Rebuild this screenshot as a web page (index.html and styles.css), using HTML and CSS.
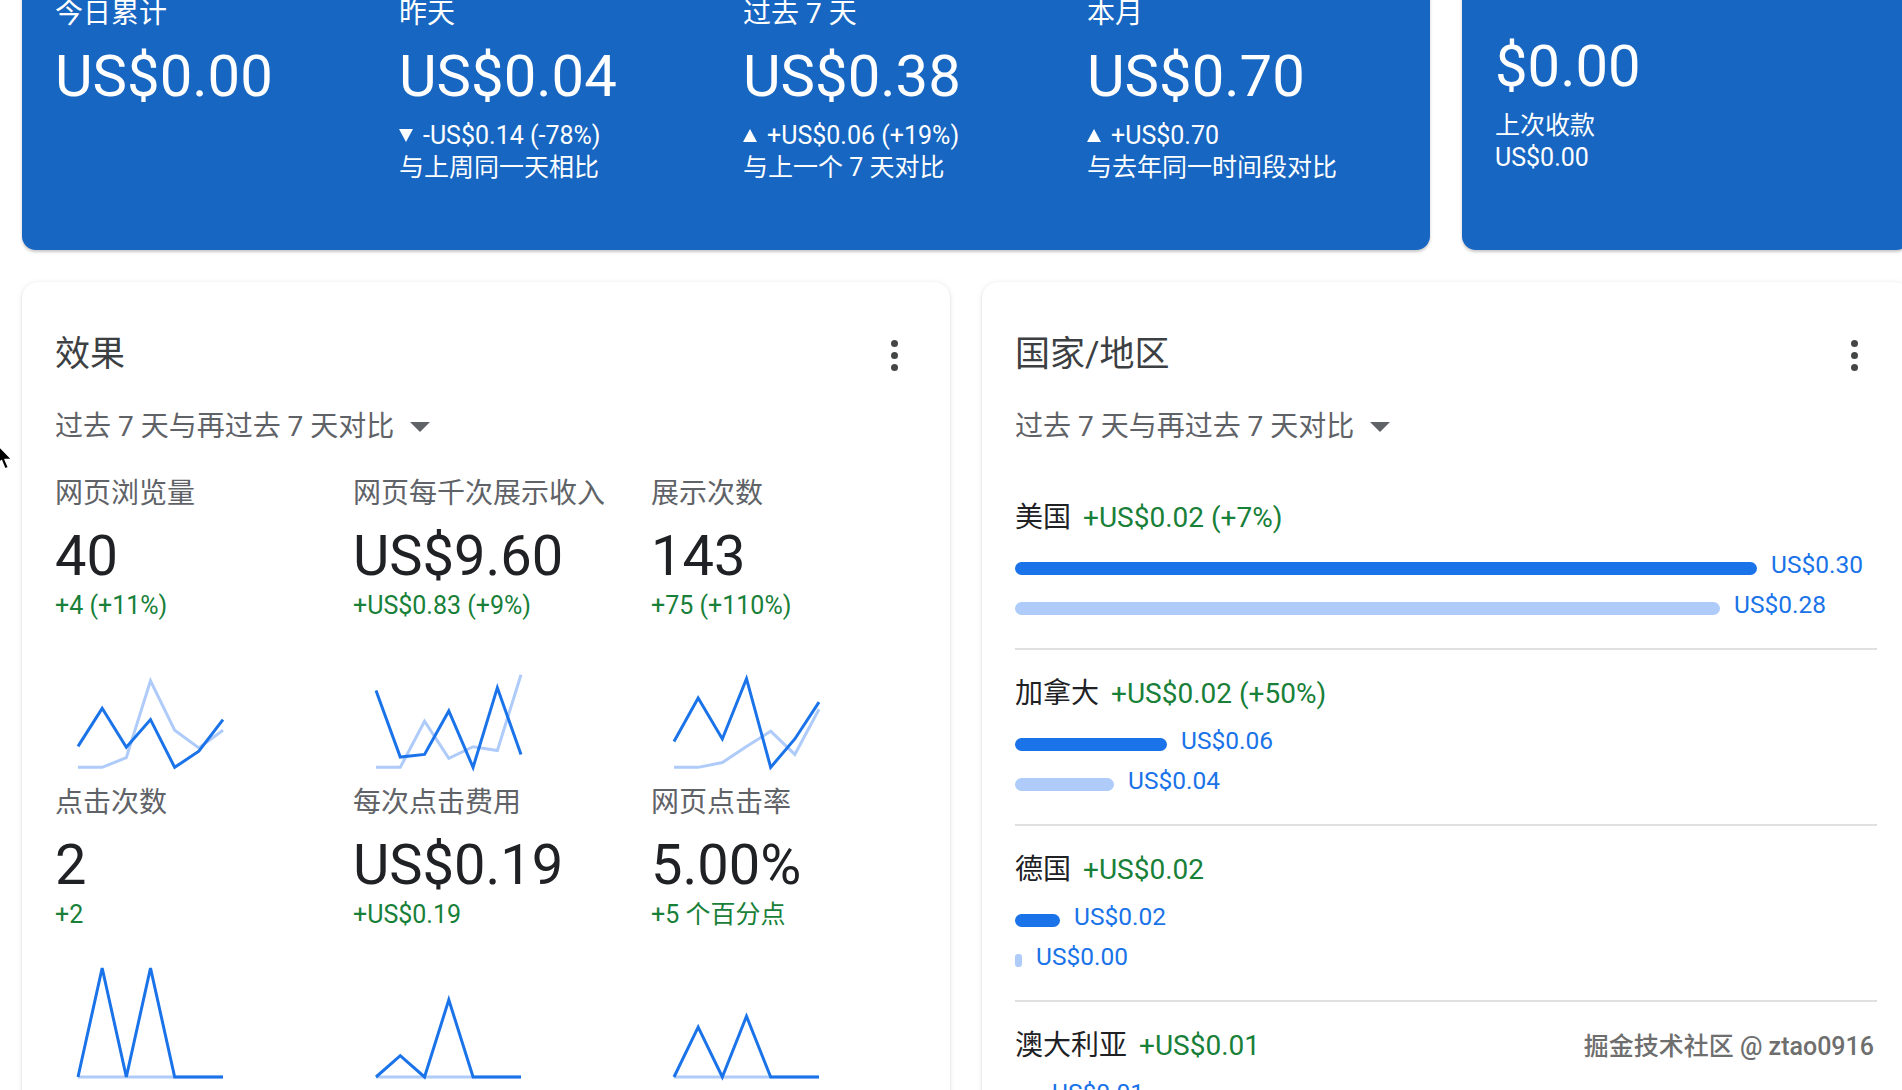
FILE: index.html
```html
<!DOCTYPE html>
<html lang="zh-CN">
<head>
<meta charset="utf-8">
<title>AdSense</title>
<link rel="stylesheet" href="styles.css">
</head>
<body>
<div class="page">
  <div class="top-row">
    <section class="earn-card">
      <div class="earn-col">
        <div class="earn-label">今日累计</div>
        <div class="earn-value">US$0.00</div>
      </div>
      <div class="earn-col">
        <div class="earn-label">昨天</div>
        <div class="earn-value">US$0.04</div>
        <div class="earn-sub first"><span class="tri down"></span>-US$0.14 (-78%)</div>
        <div class="earn-sub">与上周同一天相比</div>
      </div>
      <div class="earn-col">
        <div class="earn-label">过去 7 天</div>
        <div class="earn-value">US$0.38</div>
        <div class="earn-sub first"><span class="tri up"></span>+US$0.06 (+19%)</div>
        <div class="earn-sub">与上一个 7 天对比</div>
      </div>
      <div class="earn-col">
        <div class="earn-label">本月</div>
        <div class="earn-value">US$0.70</div>
        <div class="earn-sub first"><span class="tri up"></span>+US$0.70</div>
        <div class="earn-sub">与去年同一时间段对比</div>
      </div>
    </section>
    <section class="pay-card">
      <div class="earn-value pay-value">$0.00</div>
      <div class="earn-sub pay-first">上次收款</div>
      <div class="earn-sub">US$0.00</div>
    </section>
  </div>

  <div class="bottom-row">
    <section class="card">
      <header class="card-head">
        <h2 class="card-title">效果</h2>
        <span class="kebab"><i></i><i></i><i></i></span>
      </header>
      <div class="range">过去 7 天与再过去 7 天对比<span class="caret"></span></div>
      <div class="metrics">
        <div class="metric">
          <div class="m-label">网页浏览量</div>
          <div class="m-value">40</div>
          <div class="m-delta">+4 (+11%)</div>
          <svg class="spark" viewBox="128 41 234 341" preserveAspectRatio="none">
            <polyline class="prev" points="128,380 167,380 206,350 245,112 284,265 323,320 362,265"/>
            <polyline class="cur" points="128,315 167,197 206,318 245,232 284,380 323,330 362,232"/>
          </svg>
        </div>
        <div class="metric">
          <div class="m-label">网页每千次展示收入</div>
          <div class="m-value">US$9.60</div>
          <div class="m-delta">+US$0.83 (+9%)</div>
          <svg class="spark" viewBox="617 41 233 341" preserveAspectRatio="none">
            <polyline class="prev" points="617,380 656,380 695,237 734,352 773,316 812,328 850,93"/>
            <polyline class="cur" points="617,142 656,348 695,340 734,205 773,380 812,133 850,340"/>
          </svg>
        </div>
        <div class="metric">
          <div class="m-label">展示次数</div>
          <div class="m-value">143</div>
          <div class="m-delta">+75 (+110%)</div>
          <svg class="spark" viewBox="1103 41 234 341" preserveAspectRatio="none">
            <polyline class="prev" points="1103,380 1142,380 1181,365 1220,315 1259,268 1298,340 1337,200"/>
            <polyline class="cur" points="1103,300 1142,165 1181,292 1220,105 1259,380 1298,292 1337,178"/>
          </svg>
        </div>
        <div class="metric">
          <div class="m-label">点击次数</div>
          <div class="m-value">2</div>
          <div class="m-delta">+2</div>
          <svg class="spark" viewBox="128 975 234 335" preserveAspectRatio="none">
            <polyline class="prev" points="128,1310 362,1310"/>
            <polyline class="cur" points="128,1310 167,978 206,1310 245,978 284,1310 323,1310 362,1310"/>
          </svg>
        </div>
        <div class="metric">
          <div class="m-label">每次点击费用</div>
          <div class="m-value">US$0.19</div>
          <div class="m-delta">+US$0.19</div>
          <svg class="spark" viewBox="617 975 233 335" preserveAspectRatio="none">
            <polyline class="prev" points="617,1310 850,1310"/>
            <polyline class="cur" points="617,1310 656,1245 695,1310 734,1075 773,1310 812,1310 850,1310"/>
          </svg>
        </div>
        <div class="metric">
          <div class="m-label">网页点击率</div>
          <div class="m-value">5.00%</div>
          <div class="m-delta">+5 个百分点</div>
          <svg class="spark" viewBox="1103 975 234 335" preserveAspectRatio="none">
            <polyline class="prev" points="1103,1310 1337,1310"/>
            <polyline class="cur" points="1103,1310 1142,1158 1181,1310 1220,1125 1259,1310 1298,1310 1337,1310"/>
          </svg>
        </div>
      </div>
    </section>

    <section class="card">
      <header class="card-head">
        <h2 class="card-title">国家/地区</h2>
        <span class="kebab"><i></i><i></i><i></i></span>
      </header>
      <div class="range">过去 7 天与再过去 7 天对比<span class="caret"></span></div>
      <div class="geo-list">
        <div class="country">
          <div class="c-head">美国<span class="c-delta">+US$0.02 (+7%)</span></div>
          <div class="bar-row"><span class="bar" style="width:742px"></span><span class="bar-val">US$0.30</span></div>
          <div class="bar-row second"><span class="bar prev" style="width:705px"></span><span class="bar-val">US$0.28</span></div>
        </div>
        <div class="country">
          <div class="c-head">加拿大<span class="c-delta">+US$0.02 (+50%)</span></div>
          <div class="bar-row"><span class="bar" style="width:152px"></span><span class="bar-val">US$0.06</span></div>
          <div class="bar-row second"><span class="bar prev" style="width:99px"></span><span class="bar-val">US$0.04</span></div>
        </div>
        <div class="country">
          <div class="c-head">德国<span class="c-delta">+US$0.02</span></div>
          <div class="bar-row"><span class="bar" style="width:45px"></span><span class="bar-val">US$0.02</span></div>
          <div class="bar-row second"><span class="bar prev tiny" style="width:7px"></span><span class="bar-val">US$0.00</span></div>
        </div>
        <div class="country">
          <div class="c-head">澳大利亚<span class="c-delta">+US$0.01</span></div>
          <div class="bar-row"><span class="bar" style="width:23px"></span><span class="bar-val">US$0.01</span></div>
          <div class="bar-row second"><span class="bar prev" style="width:7px"></span><span class="bar-val">US$0.00</span></div>
        </div>
      </div>
    </section>
  </div>
</div>

<div class="watermark">掘金技术社区 @ ztao0916</div>

<svg class="cursor" width="20" height="30" viewBox="0 0 20 30">
  <path d="M1 1 L1 24 L6.5 18.5 L10 27 L13.5 25.5 L10 17.5 L17 17.5 Z" fill="#000" stroke="#fff" stroke-width="1.5" stroke-linejoin="round"/>
</svg>
</body>
</html>
```

FILE: styles.css
```css
html, body {
  margin: 0;
  padding: 0;
}

body {
  width: 1902px;
  height: 1090px;
  overflow: hidden;
  position: relative;
  background: #ffffff;
  font-family: Roboto, "Noto Sans CJK SC", sans-serif;
  color: #202124;
}

.page {
  width: 1888px;
  margin: -32px 0 0 22px;
  display: flex;
  flex-direction: column;
  gap: 32px;
}

/* ---------- top blue cards ---------- */
.top-row {
  display: flex;
  gap: 32px;
}

.earn-card,
.pay-card {
  box-sizing: border-box;
  height: 282px;
  background: #1766c1;
  border-radius: 14px;
  color: #ffffff;
  box-shadow: 0 2px 3px rgba(0, 0, 0, 0.22);
}

.earn-card {
  width: 1408px;
  padding: 28px 33px 0;
  display: grid;
  grid-template-columns: repeat(4, 344px);
  align-content: start;
}

.pay-card {
  width: 448px;
  padding: 62px 33px 0;
}

.earn-label {
  font-size: 28px;
  line-height: 36px;
}

.earn-value {
  font-size: 58px;
  line-height: 72px;
  margin-top: 8px;
}

.pay-value {
  margin-top: 0;
}

.earn-sub {
  font-size: 25px;
  line-height: 32px;
}

.earn-sub.first {
  margin-top: 8px;
}

.earn-sub.pay-first {
  margin-top: 8px;
}

.tri {
  display: inline-block;
  width: 0;
  height: 0;
  margin-right: 10px;
  vertical-align: 2px;
  border-left: 7px solid transparent;
  border-right: 7px solid transparent;
}

.tri.down {
  border-top: 13px solid #ffffff;
}

.tri.up {
  border-bottom: 13px solid #ffffff;
}

/* ---------- white cards ---------- */
.bottom-row {
  display: flex;
  gap: 32px;
}

.card {
  box-sizing: border-box;
  width: 928px;
  height: 900px;
  padding: 51px 33px 0;
  background: #ffffff;
  border-radius: 16px;
  box-shadow: 0 1px 2px rgba(60, 64, 67, 0.18), 0 1px 5px 1px rgba(60, 64, 67, 0.08);
}

.card-head {
  display: flex;
  align-items: center;
  justify-content: space-between;
  height: 44px;
}

.card-title {
  margin: 0;
  font-size: 35px;
  line-height: 44px;
  font-weight: 400;
  color: #3c4043;
}

.kebab {
  width: 46px;
  display: flex;
  flex-direction: column;
  align-items: center;
  gap: 5px;
}

.kebab i {
  display: block;
  width: 7px;
  height: 7px;
  border-radius: 50%;
  background: #444746;
}

.range {
  margin-top: 32px;
  display: flex;
  align-items: center;
  font-size: 28px;
  line-height: 36px;
  color: #5f6368;
}

.caret {
  margin-left: 16px;
  width: 0;
  height: 0;
  border-left: 10px solid transparent;
  border-right: 10px solid transparent;
  border-top: 10px solid #5f6368;
}

/* metrics */
.metrics {
  margin-top: 31px;
  display: grid;
  grid-template-columns: repeat(3, 298px);
  row-gap: 17px;
}

.m-label {
  font-size: 28px;
  line-height: 36px;
  color: #5f6368;
}

.m-value {
  margin-top: 12px;
  font-size: 56px;
  line-height: 64px;
  color: #202124;
}

.m-delta {
  margin-top: 2px;
  font-size: 25px;
  line-height: 32px;
  color: #188038;
}

.spark {
  display: block;
  width: 145px;
  height: 110px;
  margin: 36px 0 0 23px;
  overflow: visible;
}

.spark polyline {
  fill: none;
  stroke-width: 3;
  stroke-linejoin: miter;
  vector-effect: non-scaling-stroke;
}

.spark .prev {
  stroke: #aecbfa;
}

.spark .cur {
  stroke: #1a73e8;
}

/* geo */
.geo-list {
  margin-top: 55px;
}

.country {
  padding-bottom: 27px;
  margin-bottom: 26px;
  border-bottom: 2px solid #e0e0e0;
}

.c-head {
  font-size: 28px;
  line-height: 36px;
  color: #202124;
}

.c-delta {
  margin-left: 12px;
  color: #188038;
}

.bar-row {
  display: flex;
  align-items: center;
  height: 32px;
  margin-top: 13px;
}

.bar-row.second {
  margin-top: 8px;
}

.bar {
  display: block;
  height: 13px;
  margin-top: 6px;
  border-radius: 7px;
  background: #1a73e8;
}

.bar.prev {
  background: #aecbfa;
}

.bar.tiny {
  border-radius: 3px;
}

.bar-val {
  margin-left: 14px;
  font-size: 24.5px;
  line-height: 32px;
  color: #1a73e8;
}

/* overlays */
.watermark {
  position: absolute;
  right: 28px;
  bottom: 27px;
  font-size: 25px;
  line-height: 32px;
  font-weight: 500;
  color: #6e6e6e;
  text-shadow: 0 0 2px #ffffff, 0 0 2px #ffffff, 0 0 3px #ffffff;
}

.cursor {
  position: absolute;
  left: -5px;
  top: 442px;
}
```
